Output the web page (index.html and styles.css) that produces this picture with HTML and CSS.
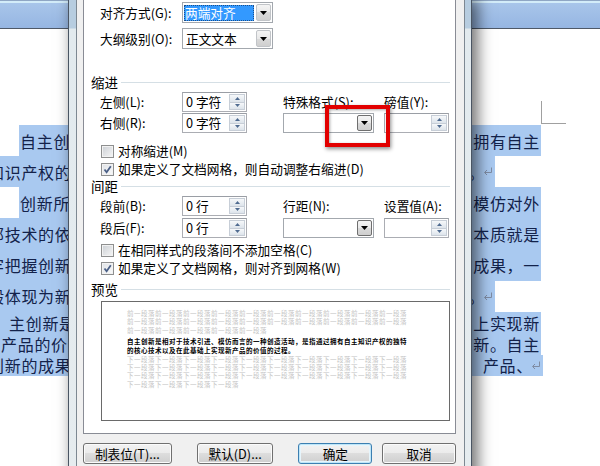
FILE: index.html
```html
<!DOCTYPE html>
<html lang="zh-CN">
<head>
<meta charset="utf-8">
<title>段落</title>
<link rel="stylesheet" href="styles.css">
</head>
<body>
<div class="screen">
  <div class="doc">
    <div class="ribbon"></div>
    <div class="page">
      <div class="ln"><div class="sel s-ind-full"><span class="lt">自主创新是相对于</span><span class="rt">是指通过拥有自主</span></div></div>
      <div class="ln"><div class="sel s-short"><span class="lt cut">知识产权的独特</span><span class="rt">价值的过程。<svg class="pm" width="10" height="9" viewBox="0 0 10 9"><path d="M8.5 0.5v5H2" fill="none" stroke="#7f8ca3" stroke-width="1"/><path d="M4 3 1.5 5.5 4 8" fill="none" stroke="#7f8ca3" stroke-width="1"/></svg></span></div></div>
      <div class="ln"><div class="sel s-ind-full"><span class="lt">创新所需的核心</span><span class="rt">摆脱技术模仿对外</span></div></div>
      <div class="ln"><div class="sel s-full"><span class="lt cut">部技术的依赖</span><span class="rt">获得的，其本质就是</span></div></div>
      <div class="ln"><div class="sel s-full"><span class="lt cut">牢把握创新核心</span><span class="rt">自主创新的成果，一</span></div></div>
      <div class="ln"><div class="sel s-short"><span class="lt cut">般体现为新的</span><span class="rt">品牌等。<svg class="pm" width="10" height="9" viewBox="0 0 10 9"><path d="M8.5 0.5v5H2" fill="none" stroke="#7f8ca3" stroke-width="1"/><path d="M4 3 1.5 5.5 4 8" fill="none" stroke="#7f8ca3" stroke-width="1"/></svg></span></div></div>
      <div class="ln tight"><div class="sel s-full"><span class="lt gap">主创新是相对</span><span class="rt">在此基础上实现新</span></div></div>
      <div class="ln tight"><div class="sel s-full"><span class="lt">产品的价值</span><span class="rt">的自主创新。自主</span></div></div>
      <div class="ln tight"><div class="sel s-last"><span class="lt cut">创新的成果</span><span class="rt">技术，产品、<svg class="pm" width="10" height="9" viewBox="0 0 10 9"><path d="M8.5 0.5v5H2" fill="none" stroke="#7f8ca3" stroke-width="1"/><path d="M4 3 1.5 5.5 4 8" fill="none" stroke="#7f8ca3" stroke-width="1"/></svg></span></div></div>
    </div>
  </div>
  <div class="cropmark"></div>

  <div class="dialog">
    <div class="dbody">
      <div class="panel">
        <div class="frow">
          <span class="lbl">对齐方式(G):</span>
          <div class="combo"><span class="val"><span class="hl">两端对齐</span></span><span class="dd"><svg width="7" height="4" viewBox="0 0 7 4"><path d="M0 0h7L3.5 4z" fill="#000"/></svg></span></div>
        </div>
        <div class="frow">
          <span class="lbl">大纲级别(O):</span>
          <div class="combo"><span class="val">正文文本</span><span class="dd"><svg width="7" height="4" viewBox="0 0 7 4"><path d="M0 0h7L3.5 4z" fill="#000"/></svg></span></div>
        </div>

        <div class="sect s-indent"><span>缩进</span></div>
        <div class="fgrid g-indent">
          <span class="lbl">左侧(L):</span>
          <div class="spin"><span class="v">0 字符</span><span class="arr"><i><svg width="5" height="3" viewBox="0 0 5 3"><path d="M0 3h5L2.5 0z" fill="#4f6b90"/></svg></i><i><svg width="5" height="3" viewBox="0 0 5 3"><path d="M0 0h5L2.5 3z" fill="#4f6b90"/></svg></i></span></div>
          <span class="lbl">特殊格式(S):</span>
          <span class="lbl">磅值(Y):</span>
          <span class="lbl">右侧(R):</span>
          <div class="spin"><span class="v">0 字符</span><span class="arr"><i><svg width="5" height="3" viewBox="0 0 5 3"><path d="M0 3h5L2.5 0z" fill="#4f6b90"/></svg></i><i><svg width="5" height="3" viewBox="0 0 5 3"><path d="M0 0h5L2.5 3z" fill="#4f6b90"/></svg></i></span></div>
          <div class="combo c20"><span class="val"></span><span class="dd dark"><svg width="7" height="4" viewBox="0 0 7 4"><path d="M0 0h7L3.5 4z" fill="#000"/></svg></span></div>
          <div class="spin"><span class="v"></span><span class="arr"><i><svg width="5" height="3" viewBox="0 0 5 3"><path d="M0 3h5L2.5 0z" fill="#4f6b90"/></svg></i><i><svg width="5" height="3" viewBox="0 0 5 3"><path d="M0 0h5L2.5 3z" fill="#4f6b90"/></svg></i></span></div>
        </div>
        <div class="chk c1"><span class="box"></span><span>对称缩进(M)</span></div>
        <div class="chk c2"><span class="box on"><svg width="11" height="11" viewBox="0 0 11 11"><path d="M2.5 5.5 4.6 8.2 8.8 2.3" fill="none" stroke="#4a5f86" stroke-width="1.8"/></svg></span><span>如果定义了文档网格，则自动调整右缩进(D)</span></div>

        <div class="sect s-space"><span>间距</span></div>
        <div class="fgrid g-space">
          <span class="lbl">段前(B):</span>
          <div class="spin"><span class="v">0 行</span><span class="arr"><i><svg width="5" height="3" viewBox="0 0 5 3"><path d="M0 3h5L2.5 0z" fill="#4f6b90"/></svg></i><i><svg width="5" height="3" viewBox="0 0 5 3"><path d="M0 0h5L2.5 3z" fill="#4f6b90"/></svg></i></span></div>
          <span class="lbl">行距(N):</span>
          <span class="lbl">设置值(A):</span>
          <span class="lbl">段后(F):</span>
          <div class="spin"><span class="v">0 行</span><span class="arr"><i><svg width="5" height="3" viewBox="0 0 5 3"><path d="M0 3h5L2.5 0z" fill="#4f6b90"/></svg></i><i><svg width="5" height="3" viewBox="0 0 5 3"><path d="M0 0h5L2.5 3z" fill="#4f6b90"/></svg></i></span></div>
          <div class="combo c20"><span class="val"></span><span class="dd dark"><svg width="7" height="4" viewBox="0 0 7 4"><path d="M0 0h7L3.5 4z" fill="#000"/></svg></span></div>
          <div class="spin"><span class="v"></span><span class="arr"><i><svg width="5" height="3" viewBox="0 0 5 3"><path d="M0 3h5L2.5 0z" fill="#4f6b90"/></svg></i><i><svg width="5" height="3" viewBox="0 0 5 3"><path d="M0 0h5L2.5 3z" fill="#4f6b90"/></svg></i></span></div>
        </div>
        <div class="chk c3"><span class="box"></span><span>在相同样式的段落间不添加空格(C)</span></div>
        <div class="chk c4"><span class="box on"><svg width="11" height="11" viewBox="0 0 11 11"><path d="M2.5 5.5 4.6 8.2 8.8 2.3" fill="none" stroke="#4a5f86" stroke-width="1.8"/></svg></span><span>如果定义了文档网格，则对齐到网格(W)</span></div>

        <div class="sect s-prev"><span>预览</span></div>
        <div class="preview">
          <div class="pv">前一段落前一段落前一段落前一段落前一段落前一段落前一段落前一段落前一段落前一段落前一段落前一段落前一段落前一段落前一段落前一段落前一段落前一段落前一段落前一段落前一段落前一段落前一段落前一段落前一段落</div>
          <div class="pv cur">自主创新是相对于技术引进、模仿而言的一种创造活动，是指通过拥有自主知识产权的独特的核心技术以及在此基础上实现新产品的价值的过程。</div>
          <div class="pv">下一段落下一段落下一段落下一段落下一段落下一段落下一段落下一段落下一段落下一段落下一段落下一段落下一段落下一段落下一段落下一段落下一段落下一段落下一段落下一段落下一段落下一段落下一段落下一段落下一段落下一段落下一段落下一段落下一段落下一段落下一段落下一段落下一段落下一段落</div>
        </div>
      </div>
      <div class="btnrow">
        <div class="btn b1">制表位(T)...</div>
        <div class="btn b2">默认(D)...</div>
        <div class="btn b3">确定</div>
        <div class="btn b4">取消</div>
      </div>
    </div>
  </div>

  <div class="redbox"></div>
</div>
</body>
</html>
```

FILE: styles.css
```css
* { box-sizing: border-box; }
html, body { margin: 0; padding: 0; }
body {
  width: 600px;
  height: 466px;
  overflow: hidden;
  background: #fff;
  font-family: "Noto Sans CJK SC", "Noto Sans", sans-serif;
}
.screen { position: relative; width: 600px; height: 466px; overflow: hidden; }

/* ---------- document behind ---------- */
.doc { display: flex; flex-direction: column; height: 100%; }
.ribbon {
  flex: none;
  height: 29px;
  border-bottom: 1px solid #4f5967;
  background: linear-gradient(to bottom, #8fa6c4 0, #8fa6c4 1px, #d3ecf9 1px, #d3ecf9 3px, #a8c5ea 3px, #96b6e2 28px);
}
.page {
  flex: 1;
  background: #fff;
  padding-top: 96px;
  display: flex;
  flex-direction: column;
  font-size: 16px;
  letter-spacing: 0.7px;
  color: #13224a;
}
.ln { flex: none; height: 31.17px; display: flex; }
.ln.tight { height: 21.33px; }
.sel {
  height: 100%;
  display: flex;
  align-items: center;
  justify-content: space-between;
  background: #a9c9f0;
  overflow: hidden;
  white-space: nowrap;
  line-height: 18px;
}
.s-ind-full { margin-left: 19px; width: 522px; }
.s-full { width: 541px; }
.s-short { width: 495px; }
.s-last { width: 543px; }
.lt { margin-left: 1px; }
.lt.cut { margin-left: -12px; }
.lt.gap { margin-left: 9px; }
.rt { display: flex; align-items: center; padding-right: 1px; }
.pm { margin-left: -2px; margin-right: 1px; }
.cropmark {
  position: absolute;
  left: 541px;
  top: 101px;
  width: 25px;
  height: 23px;
  border-left: 1px solid #a0a0a0;
  border-bottom: 1px solid #a0a0a0;
}

/* ---------- dialog ---------- */
.dialog {
  position: absolute;
  left: 68px;
  top: 0;
  width: 404px;
  height: 490px;
  border: 1px solid #4a5563;
  border-top: 0;
  padding: 0 6px 0 7px;
  background: linear-gradient(to bottom, #b7cde0 0, #b7cde0 28px, #e2eaee 29px, #e6ecef 100%);
  box-shadow: 5px 0 14px 1px rgba(0, 0, 0, 0.55);
}
.dbody {
  height: 100%;
  background: #f0f0f0;
  border-left: 1px solid #7d8892;
  border-right: 1px solid #7d8892;
  padding: 0 8px 0 6px;
  display: flex;
  flex-direction: column;
  font-size: 12.7px;
  line-height: 14px;
  color: #000;
}
.panel {
  flex: none;
  height: 434px;
  background: #fff;
  border: 1px solid #898c95;
  border-top: 0;
  padding-top: 2px;
  display: flex;
  flex-direction: column;
}
.lbl { white-space: nowrap; }

.frow { display: flex; align-items: center; height: 21px; padding-left: 16px; }
.frow + .frow { margin-top: 5px; }
.frow .lbl { width: 82px; }

.sect {
  display: flex;
  align-items: center;
  gap: 3px;
  height: 14px;
  margin: 0 5px 0 7px;
  font-size: 13.5px;
}
.sect::after { content: ""; flex: 1; border-top: 1px solid #d5dfe5; }
.s-indent { margin-top: 26px; }
.s-space { margin-top: 3px; }
.s-prev { margin-top: 7px; }

.fgrid {
  display: grid;
  grid-template-columns: 82px 101px 101px 65px;
  grid-template-rows: 20px 20px;
  align-items: center;
  padding-left: 16px;
}
.g-indent { margin-top: 3px; row-gap: 1px; }
.g-space { margin-top: 3px; row-gap: 2px; }

/* combo box */
.combo {
  display: flex;
  width: 91px;
  height: 21px;
  border: 1px solid #a3a8ae;
  background: #fff;
  padding: 1px;
}
.combo.c20 { height: 20px; }
.combo .val { flex: 1; display: flex; align-items: stretch; padding-top: 1px; }
.combo .hl {
  flex: 1;
  margin-right: 2px;
  background: #3399ff;
  color: #fff;
  display: flex;
  align-items: center;
  padding-left: 1px;
  outline: 1px dotted #1d4f8a;
  outline-offset: -1px;
}
.combo .val:not(:has(.hl)) { align-items: center; padding-left: 2px; }
.dd {
  flex: none;
  width: 15px;
  display: flex;
  align-items: center;
  justify-content: center;
  border: 1px solid #c1c4c8;
  border-radius: 2px;
  background: linear-gradient(#f4f4f4 0, #e9e9e9 50%, #dadada 50%, #cfcfcf 100%);
}
.dd.dark { border-color: #6f6f6f; }

/* spin box */
.spin {
  display: flex;
  width: 65px;
  height: 20px;
  border: 1px solid #abadb3;
  border-top-color: #9a9ea5;
  background: #fff;
  padding: 1px;
}
.spin .v { flex: 1; display: flex; align-items: center; padding-left: 2px; white-space: pre; }
.spin .arr { flex: none; width: 16px; display: flex; flex-direction: column; }
.spin .arr i {
  flex: 1;
  display: flex;
  align-items: center;
  justify-content: center;
  border: 1px solid #c7ced7;
  background: linear-gradient(#f6f8fa, #dde4eb);
}
.spin .arr i + i { border-top: 0; }

/* check boxes */
.chk { display: flex; align-items: center; gap: 4px; height: 14px; padding-left: 17px; white-space: nowrap; }
.c1 { margin-top: 11px; }
.c2 { margin-top: 4px; }
.c3 { margin-top: 5px; }
.c4 { margin-top: 4px; }
.box {
  flex: none;
  width: 13px;
  height: 13px;
  border: 1px solid #8e8f8f;
  background: linear-gradient(135deg, #cbcfd4, #f6f6f6);
  box-shadow: inset 0 0 0 1px #f2f2f2;
  display: flex;
  align-items: center;
  justify-content: center;
}
.box.on { background: linear-gradient(135deg, #dfe2e6, #fafafa); }

/* preview */
.preview {
  margin: 5px 0 0 17px;
  width: 349px;
  height: 120px;
  border: 1px solid #6a6a6a;
  padding: 7px 0 0 25px;
  font-size: 6.5px;
  letter-spacing: 0.5px;
  line-height: 8.3px;
}
.pv { width: 281px; color: #c4c4c4; }
.pv.cur { color: #000; font-weight: 700; margin: 3.4px 0 1px; }

/* buttons */
.btnrow { display: flex; margin-top: 9px; }
.btn {
  height: 21px;
  border: 1px solid #707070;
  border-radius: 3px;
  background: linear-gradient(#f2f2f2 0, #ebebeb 50%, #dddddd 50%, #cfcfcf 100%);
  box-shadow: inset 0 0 0 1px #fbfbfb;
  display: flex;
  align-items: center;
  justify-content: center;
  white-space: nowrap;
}
.b1 { width: 89px; }
.b2 { width: 77px; margin-left: 25px; }
.b3 { width: 74px; margin-left: 25px; border-color: #3c7fb1; box-shadow: inset 0 0 0 1px #bfe6f8, inset 0 0 0 2px #e6f5fc; }
.b4 { width: 74px; margin-left: 10px; }

/* red annotation */
.redbox {
  position: absolute;
  left: 325px;
  top: 105px;
  width: 65px;
  height: 42px;
  border: 4px solid #e20000;
  box-shadow: 1px 2px 4px rgba(0, 0, 0, 0.45), inset 1px 1px 3px rgba(0, 0, 0, 0.35);
}
```
